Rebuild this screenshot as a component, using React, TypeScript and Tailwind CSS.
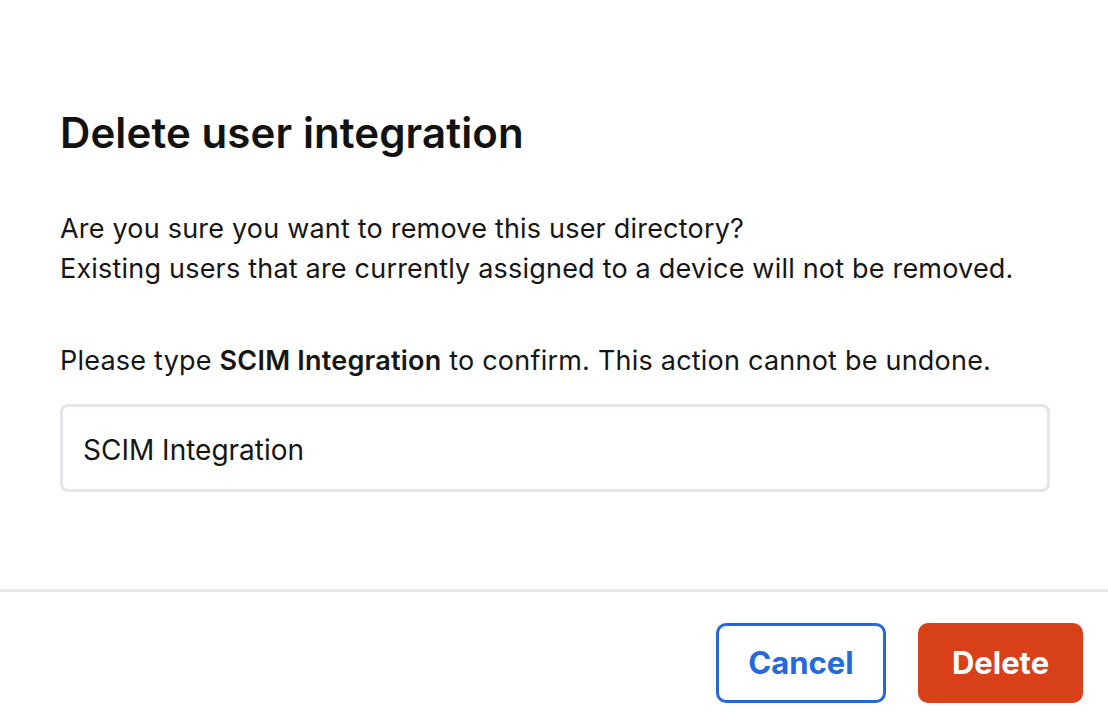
export default function App() {
  return (
    <div
      className="w-[1108px] h-[728px] bg-white flex flex-col text-[#161616]"
      style={{ fontFamily: "Inter, 'Noto Sans', sans-serif" }}
    >
      <div className="pl-[60px] pr-[58px] pt-[108px]">
        <h1 className="text-[42px] leading-[50px] font-semibold tracking-[0.1px] text-[#121212]">
          Delete user integration
        </h1>
        <p className="mt-[51px] text-[27px] leading-[40px] tracking-[0.2px]">
          Are you sure you want to remove this user directory?
          <br />
          Existing users that are currently assigned to a device will not be removed.
        </p>
        <p className="mt-[52px] text-[27px] leading-[40px] tracking-[0.22px]">
          Please type <strong className="font-semibold">SCIM Integration</strong> to confirm. This
          action cannot be undone.
        </p>
        <input
          readOnly
          value="SCIM Integration"
          className="mt-[23px] w-[990px] h-[88px] border-[3px] border-[#e4e5ec] rounded-[8px] pl-[20px] pt-[3px] text-[28px] text-[#161616] outline-none"
        />
      </div>
      <div className="mt-[97px] h-[3px] bg-[#e6e6ec]" />
      <div className="flex justify-end gap-[32px] pr-[25px] pt-[31px]">
        <button className="w-[170px] h-[80px] border-[3px] border-[#2468d9] rounded-[10px] text-[#2468d9] text-[31px] font-bold">
          Cancel
        </button>
        <button className="w-[165px] h-[80px] bg-[#d8401a] rounded-[10px] text-white text-[31px] font-bold">
          Delete
        </button>
      </div>
    </div>
  );
}
